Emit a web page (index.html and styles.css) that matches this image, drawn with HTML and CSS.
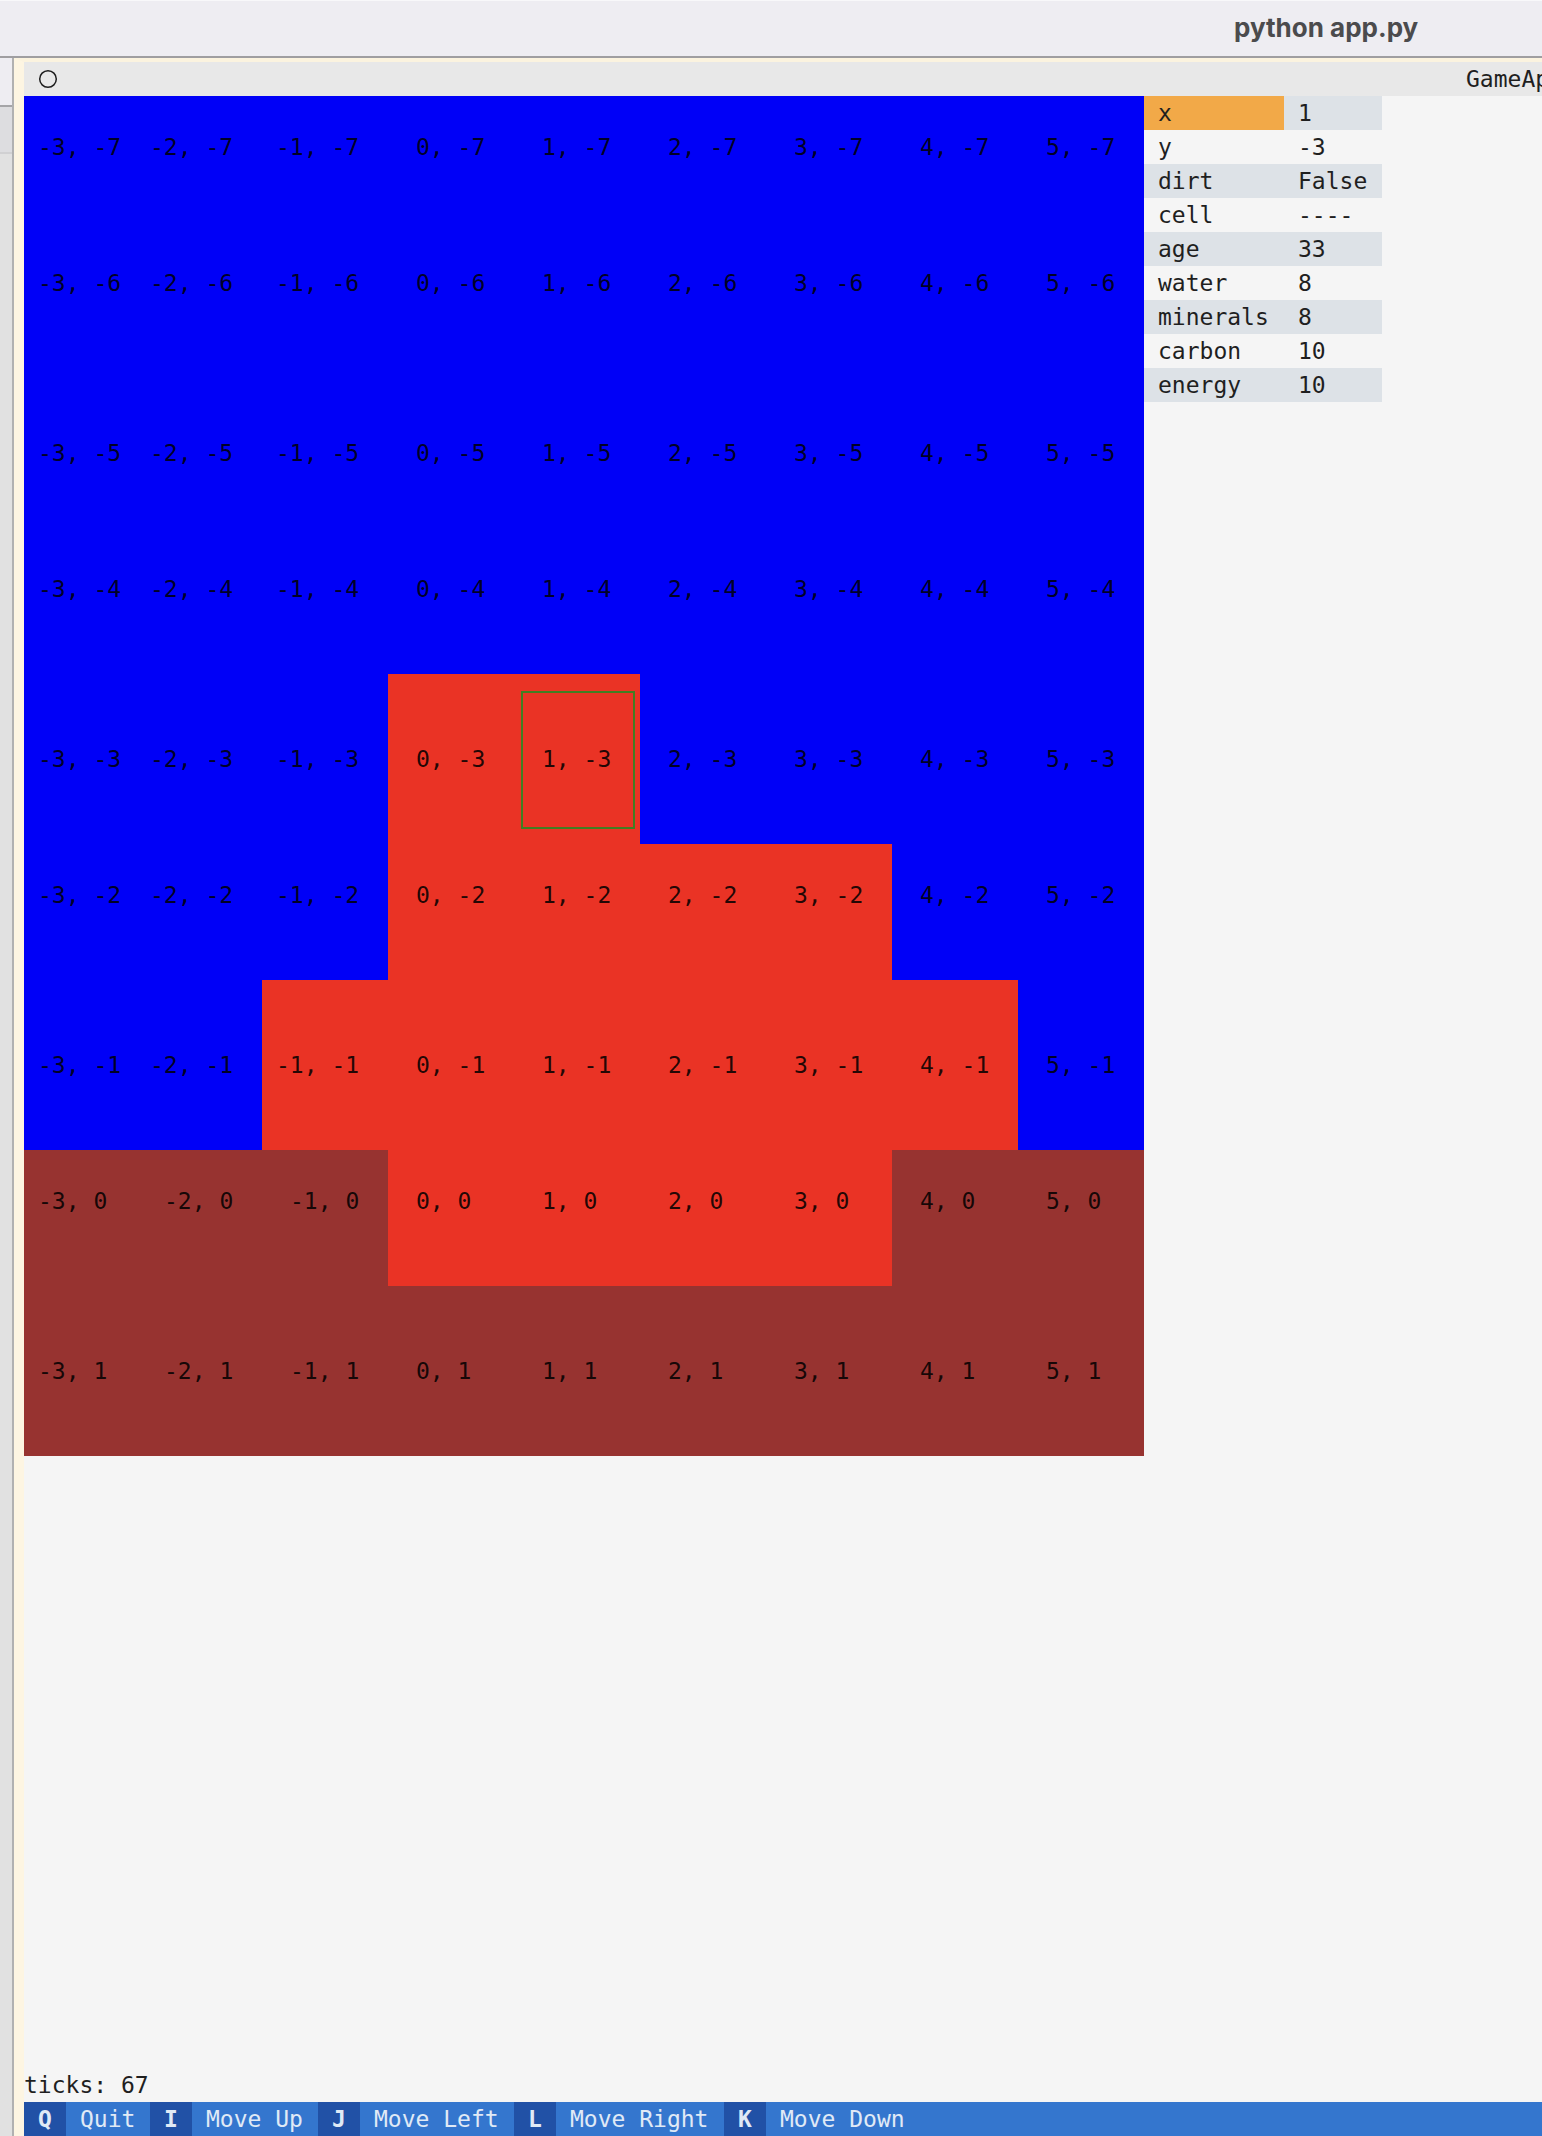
FILE: index.html
```
<!DOCTYPE html>
<html lang="en">
<head>
<meta charset="utf-8">
<title>python app.py</title>
<link rel="stylesheet" href="styles.css">
</head>
<body>
<header class="titlebar"><h1 class="title">python app.py</h1></header>
<div class="desktop">
  <aside class="backdrop"><div class="backdrop-top"></div><div class="backdrop-tabs"></div></aside>
  <div class="terminal">
    <div class="app-header">
      <button class="palette" aria-label="Command palette"><svg width="20" height="20" viewBox="0 0 20 20"><circle cx="10" cy="10" r="8.3" fill="none" stroke="#1e1e1e" stroke-width="1.5"/></svg></button>
      <span class="app-name">GameApp</span>
    </div>
    <main class="content">
      <div class="world" id="world"></div>
      <table class="stats">
        <tbody>
          <tr><th class="cursor" scope="row">x</th><td>1</td></tr>
          <tr><th scope="row">y</th><td>-3</td></tr>
          <tr><th scope="row">dirt</th><td>False</td></tr>
          <tr><th scope="row">cell</th><td>----</td></tr>
          <tr><th scope="row">age</th><td>33</td></tr>
          <tr><th scope="row">water</th><td>8</td></tr>
          <tr><th scope="row">minerals</th><td>8</td></tr>
          <tr><th scope="row">carbon</th><td>10</td></tr>
          <tr><th scope="row">energy</th><td>10</td></tr>
        </tbody>
      </table>
    </main>
    <div class="ticks">ticks: 67</div>
    <footer class="keys">
      <button class="binding"><kbd>Q</kbd><span>Quit</span></button>
      <button class="binding"><kbd>I</kbd><span>Move Up</span></button>
      <button class="binding"><kbd>J</kbd><span>Move Left</span></button>
      <button class="binding"><kbd>L</kbd><span>Move Right</span></button>
      <button class="binding"><kbd>K</kbd><span>Move Down</span></button>
    </footer>
  </div>
</div>
<script src="world.js"></script>
</body>
</html>
```
FILE: styles.css
```
* { box-sizing: border-box; }

body {
  margin: 0;
  min-height: 100vh;
  display: flex;
  flex-direction: column;
  overflow-x: hidden;
  background: #f5f5f5;
  color: #1f1f1f;
  font: 23px/34px "DejaVu Sans Mono", "Liberation Mono", monospace;
}

button {
  margin: 0;
  padding: 0;
  border: 0;
  background: none;
  color: inherit;
  font: inherit;
  text-align: left;
}

.titlebar {
  height: 58px;
  padding-left: 1234px;
  background: #eeedf2;
  border-top: 1px solid #f8f8fa;
  border-bottom: 2px solid #9f9ea1;
  white-space: nowrap;
}

.title {
  margin: 0;
  font: 700 26px/54px Inter, "Liberation Sans", sans-serif;
  color: #4b4b4d;
}

.desktop {
  flex: 1;
  display: flex;
}

.backdrop {
  flex: none;
  width: 14px;
  background: #e1e1e1;
  border-right: 2px solid #b1b1b1;
}

.backdrop-top {
  height: 49px;
  background: #eeedf2;
  border-bottom: 2px solid #a5a5a8;
}

.backdrop-tabs {
  height: 47px;
  background: #dddde0;
  border-bottom: 2px solid #d0d0d2;
}

.terminal {
  flex: 1;
  min-width: 0;
  display: flex;
  flex-direction: column;
  border-top: 4px solid #fbf3df;
  border-left: 10px solid #fdf5e2;
}

.app-header {
  display: flex;
  align-items: center;
  height: 34px;
  padding-left: 14px;
  overflow: hidden;
  background: #e8e8e8;
}

.palette {
  display: flex;
  width: 1428px;
  flex: none;
}

.content {
  flex: 1;
  display: flex;
  align-items: flex-start;
}

.world {
  flex: none;
  display: grid;
  grid-template-columns: 112px repeat(8, 126px);
}

.cell {
  padding: 34px 0 0 28px;
  color: rgba(0, 0, 0, 0.87);
  white-space: nowrap;
}

.short { height: 136px; }
.tall { height: 170px; padding-top: 68px; }
.near { padding-left: 14px; }
.water { background: #0000f7; }
.dirt { background: #973330; }
.plant { background: #ea3325; }

.selected { padding: 17px 5px 15px 7px; }

.selection {
  display: block;
  height: 100%;
  padding: 49px 0 0 19px;
  border: 2px solid #427d22;
}

.stats {
  border-collapse: collapse;
}

.stats th,
.stats td {
  height: 34px;
  padding: 0 14px;
  font-weight: 400;
  text-align: left;
}

.stats th { width: 140px; }
.stats td { width: 98px; }
.stats tr:nth-child(odd) { background: #dde2e7; }
.stats .cursor { background: #f2a948; }

.keys {
  display: grid;
  grid-template-columns: 126px 168px 196px 210px 210px;
  height: 34px;
  background: #3476ce;
  color: #e0eaf6;
}

.binding {
  display: flex;
  white-space: nowrap;
}

.binding kbd {
  width: 42px;
  margin-right: 14px;
  padding-left: 14px;
  background: #2151a6;
  font: inherit;
  font-weight: 700;
}
```
FILE: world.js
```
// Each row lists the terrain from x = -3 to x = 5: w water, d dirt, p plant.
const rows = [
  { y: -7, lines: "short", terrain: "wwwwwwwww" },
  { y: -6, lines: "short", terrain: "wwwwwwwww" },
  { y: -5, lines: "tall", terrain: "wwwwwwwww" },
  { y: -4, lines: "short", terrain: "wwwwwwwww" },
  { y: -3, lines: "tall", terrain: "wwwppwwww" },
  { y: -2, lines: "short", terrain: "wwwppppww" },
  { y: -1, lines: "tall", terrain: "wwppppppw" },
  { y: 0, lines: "short", terrain: "dddppppdd" },
  { y: 1, lines: "tall", terrain: "ddddddddd" }
];
const kinds = { w: "water", d: "dirt", p: "plant" };
const world = document.getElementById("world");

for (const row of rows) {
  [...row.terrain].forEach((kind, i) => {
    const x = i - 3;
    const label = `${x}, ${row.y}`;
    const cell = document.createElement("div");
    cell.className = `cell ${row.lines} ${kinds[kind]}`;
    if (label.length === 6 || x === -3) cell.classList.add("near");
    if (x === 1 && row.y === -3) {
      cell.classList.add("selected");
      const box = document.createElement("span");
      box.className = "selection";
      box.textContent = label;
      cell.append(box);
    } else {
      cell.textContent = label;
    }
    world.append(cell);
  });
}
```
